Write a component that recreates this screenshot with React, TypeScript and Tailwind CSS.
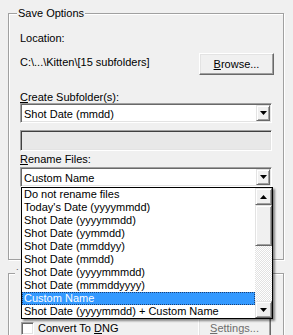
import { ReactNode } from "react";

const renameOptions = [
  "Do not rename files",
  "Today's Date (yyyymmdd)",
  "Shot Date (yyyymmdd)",
  "Shot Date (yymmdd)",
  "Shot Date (mmddyy)",
  "Shot Date (mmdd)",
  "Shot Date (yyyymmmdd)",
  "Shot Date (mmmddyyyy)",
  "Custom Name",
  "Shot Date (yyyymmdd) + Custom Name",
];

function Arrow({ up = false }: { up?: boolean }) {
  return (
    <svg width="7" height="4" viewBox="0 0 7 4" className="block">
      {up ? <path d="M0 4 L3.5 0 L7 4 Z" fill="#000" /> : <path d="M0 0 L7 0 L3.5 4 Z" fill="#000" />}
    </svg>
  );
}

function ArrowButton({ up = false, className = "" }: { up?: boolean; className?: string }) {
  return (
    <div
      className={`flex items-center justify-center border border-t-[#e3e3e3] border-l-[#e3e3e3] border-b-[#696969] border-r-[#696969] bg-[#f0f0f0] shadow-[inset_1px_1px_0_#fff,inset_-1px_-1px_0_#a0a0a0] ${className}`}
    >
      <Arrow up={up} />
    </div>
  );
}

function Combo({ value }: { value: string }) {
  return (
    <div className="flex h-[20px] w-[252px] items-center border border-t-[#a0a0a0] border-l-[#a0a0a0] border-b-white border-r-white bg-white shadow-[inset_1px_1px_0_#696969,inset_-1px_-1px_0_#e3e3e3]">
      <span className="flex-1 pl-[3px] pt-[1px]">{value}</span>
      <ArrowButton className="mr-[1px] h-[16px] w-[14px]" />
    </div>
  );
}

function Label({ children }: { children: ReactNode }) {
  return <div className="leading-[12px]">{children}</div>;
}

export default function App() {
  return (
    <div className="relative h-[335px] w-[293px] overflow-hidden bg-[#f0f0f0] font-['Liberation_Sans',Arial,sans-serif] text-[11px] leading-[14px] text-black">
      <div className="ml-[8px] mt-[13px] h-[247px] w-[276px] border border-[#a0a0a0] pl-[11px] pr-[10px] shadow-[inset_1px_1px_0_#fff,1px_1px_0_#fff]">
        <div className="-ml-[3px] -mt-[8px] w-fit bg-[#f0f0f0] px-[1px]">Save Options</div>

        <div className="mt-[11px]">Location:</div>
        <div className="mt-[8px] flex h-[22px] items-start justify-between">
          <span className="mt-[2px]">C:\...\Kitten\[15 subfolders]</span>
          <button className="-mr-[1px] flex h-[22px] w-[75px] items-center justify-center border border-t-white border-l-white border-b-[#696969] border-r-[#696969] bg-[#f0f0f0] shadow-[inset_-1px_-1px_0_#a0a0a0,inset_1px_1px_0_#e3e3e3]">
            <span>
              <u>B</u>rowse...
            </span>
          </button>
        </div>

        <div className="mt-[16px]">
          <Label>
            <u>C</u>reate Subfolder(s):
          </Label>
        </div>
        <Combo value="Shot Date (mmdd)" />
        <div className="mt-[7px] h-[21px] w-[252px] border border-t-[#a0a0a0] border-l-[#a0a0a0] border-b-white border-r-white bg-[#e8e8e8] shadow-[inset_1px_1px_0_#404040,inset_-1px_-1px_0_#e3e3e3]" />

        <div className="mt-[2px]">
          <Label>
            <u>R</u>ename Files:
          </Label>
        </div>
        <div className="mt-[2px]">
          <Combo value="Custom Name" />
        </div>
      </div>

      <div className="ml-[8px] mt-[13px] h-[80px] w-[276px] border border-[#a0a0a0] pl-[12px] pr-[12px] shadow-[inset_1px_1px_0_#fff,1px_1px_0_#fff]">
        <div className="-ml-[6px] -mt-[8px] w-fit bg-[#f0f0f0] px-[1px] text-[#555]">˙</div>
        <div className="mt-[37px] flex h-[22px] items-center">
          <div className="h-[13px] w-[13px] border border-t-[#a0a0a0] border-l-[#a0a0a0] border-b-white border-r-white bg-white shadow-[inset_1px_1px_0_#696969,inset_-1px_-1px_0_#e3e3e3]" />
          <span className="ml-[4px]">
            Convert To <u>D</u>NG
          </span>
          <button className="ml-auto flex h-[22px] w-[73px] items-center justify-center border border-t-white border-l-white border-b-[#696969] border-r-[#696969] bg-[#f0f0f0] text-[#6d6d6d] shadow-[inset_-1px_-1px_0_#a0a0a0,inset_1px_1px_0_#e3e3e3]">
            <span>
              <u>S</u>ettings...
            </span>
          </button>
        </div>
      </div>

      <div className="absolute left-[21px] top-[187px] flex h-[132px] w-[252px] border border-black bg-white shadow-[2px_2px_2px_rgba(0,0,0,0.45)]">
        <div className="flex-1">
          {renameOptions.map((option) => (
            <div
              key={option}
              className={
                option === "Custom Name"
                  ? "h-[13px] whitespace-nowrap bg-[#3399ff] pl-[2px] leading-[13px] text-white outline-1 -outline-offset-1 outline-dotted outline-[#1c3f73]"
                  : "h-[13px] whitespace-nowrap pl-[2px] leading-[13px]"
              }
            >
              {option}
            </div>
          ))}
        </div>
        <div className="flex w-[17px] flex-col">
          <ArrowButton up className="h-[17px]" />
          <div className="h-[41px] border border-t-[#e3e3e3] border-l-[#e3e3e3] border-b-[#696969] border-r-[#696969] bg-[#f0f0f0] shadow-[inset_1px_1px_0_#fff,inset_-1px_-1px_0_#a0a0a0]" />
          <div className="flex-1 bg-[repeating-conic-gradient(#ffffff_0%_25%,#e2e2e2_0%_50%)] bg-[length:2px_2px]" />
          <ArrowButton className="h-[17px]" />
        </div>
      </div>
    </div>
  );
}
